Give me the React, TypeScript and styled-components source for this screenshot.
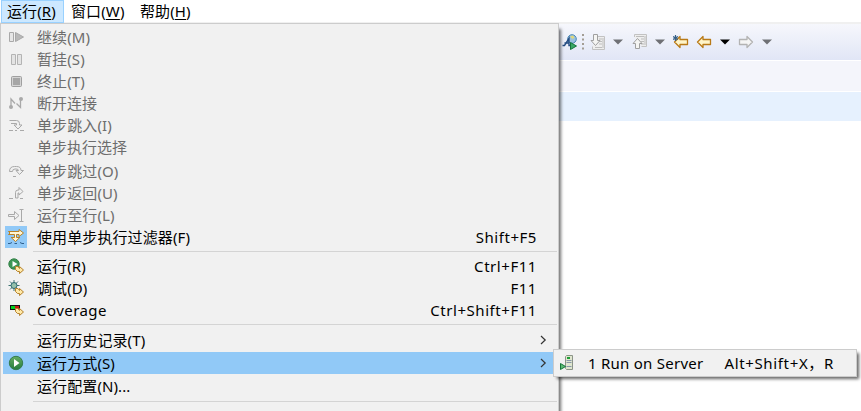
import React from 'react';
import styled, { createGlobalStyle } from 'styled-components';

const GlobalStyle = createGlobalStyle`
  * { box-sizing: border-box; }
  body {
    margin: 0;
    background: #fff;
    overflow: hidden;
    font-family: 'Noto Sans', 'Noto Sans CJK SC', sans-serif;
    font-size: 15px;
    color: #000;
  }
`;

const Window = styled.div`
  position: relative;
  width: 861px;
  height: 411px;
  overflow: hidden;
  background: #fff;
`;

const MenuBar = styled.nav`
  display: flex;
  height: 22px;
  padding-left: 1px;
  background: #fff;
`;

const MenuBarItem = styled.div<{ $open?: boolean; $width: number }>`
  width: ${p => p.$width}px;
  height: 23px;
  padding-left: ${p => (p.$open ? 5 : 6)}px;
  border: 1px solid ${p => (p.$open ? '#99d1ff' : 'transparent')};
  background: ${p => (p.$open ? '#cce8ff' : 'transparent')};
  line-height: 20px;
  letter-spacing: 0.1px;
  white-space: nowrap;
`;

const Toolbar = styled.div`
  display: flex;
  align-items: center;
  height: 38px;
  padding: 0 0 0 562px;
  border-top: 2px solid #f0f0f0;
  background: linear-gradient(#f6f7fc, #e1e6f6);
`;

const Tool = styled.span<{ $gap: number }>`
  display: flex;
  margin-left: ${p => p.$gap}px;
`;

const TabStrip = styled.div`
  height: 30px;
  margin-top: 1px;
  background: #f4f5fb;
`;

const CurrentLine = styled.div`
  height: 29px;
  margin-top: 1px;
  background: #e6f1fe;
`;

const Popup = styled.div`
  position: absolute;
  border: 1px solid #ccc;
  background: #f1f1f1;
`;

const RunMenu = styled(Popup)`
  left: 0;
  top: 23px;
  width: 559px;
  height: 420px;
  padding: 2px 0 0 2px;
  box-shadow: 3px 5px 3px -1px rgba(0, 0, 0, 0.55);
`;

const SubMenu = styled(Popup)`
  left: 553px;
  top: 349px;
  width: 304px;
  height: 28px;
  padding: 2px 1px 2px 0;
  box-shadow: 3px 3px 3px -1px rgba(0, 0, 0, 0.6);
`;

const Row = styled.div<{ $active?: boolean; $disabled?: boolean; $before?: number }>`
  display: flex;
  align-items: center;
  height: 22px;
  margin-top: ${p => p.$before ?? 0}px;
  padding-right: 11px;
  background: ${p => (p.$active ? '#91c9f7' : 'transparent')};
  color: ${p => (p.$disabled ? '#6d6d6d' : '#000')};
`;

const IconCell = styled.span<{ $checked?: boolean }>`
  display: flex;
  align-items: center;
  justify-content: center;
  width: 22px;
  height: 22px;
  margin: 0 10px 0 2px;
  background: ${p => (p.$checked ? '#91c9f7' : 'transparent')};
`;

const Label = styled.span<{ $spacing?: number }>`
  flex: 1;
  line-height: 22px;
  letter-spacing: ${p => p.$spacing ?? 0.1}px;
  white-space: pre;
`;

const Accel = styled.span<{ $spacing?: number }>`
  margin-right: 10px;
  line-height: 22px;
  letter-spacing: ${p => p.$spacing ?? 0.55}px;
  white-space: pre;
`;

const Separator = styled.div<{ $height: number; $lead: number }>`
  height: ${p => p.$height}px;
  margin: 0 1px 0 30px;
  padding-top: ${p => p.$lead}px;
  &::before {
    content: '';
    display: block;
    height: 1px;
    background: #d4d4d4;
  }
`;

const Key = styled.span`
  text-decoration: underline;
  text-decoration-thickness: 1px;
  text-underline-offset: 2px;
`;

const Svg = ({ children, w = 16, h = 16 }: { children: React.ReactNode; w?: number; h?: number }) => (
  <svg width={w} height={h} viewBox={`0 0 ${w} ${h}`} fill="none">{children}</svg>
);

const G = '#a9a9a9';

const ResumeIcon = () => (
  <Svg><path d="M1.500 3.500h4v9h-4z" fill="#e6e6e6" stroke={G} /><path d="M7.500 3.500v9l8-4.500z" fill="#b9b9b9" stroke={G} /></Svg>
);
const SuspendIcon = () => (
  <Svg><path d="M3.500 3.500h4v10h-4zM9.500 3.500h4v10h-4z" fill="#e4e4e4" stroke="#b4b4b4" /></Svg>
);
const StopIcon = () => (
  <Svg><rect x="3.500" y="3.500" width="10" height="10" rx="1" fill="#d4d4d4" stroke="#a0a0a0" /><path d="M5 5h7v7H5z" fill="#a6a6a6" /></Svg>
);
const DisconnectIcon = () => (
  <Svg>
    <path d="M3 12V4l4 4.500M12.500 5v7.500L8.500 8.500" stroke={G} strokeWidth="1.300" />
    <circle cx="3" cy="12" r="2" fill={G} /><circle cx="13" cy="4" r="2" fill={G} />
  </Svg>
);
const StepIntoIcon = () => (
  <Svg>
    <path d="M1.500 3.500h7q3 0 3 3v1.500h2.500l-4 4-4-4H8.500V6.500H3" fill="#f0f0f0" stroke={G} />
    <path d="M1 13.500h4M7 13.500h2M12 13.500h4" stroke={G} />
  </Svg>
);
const StepOverIcon = () => (
  <Svg>
    <path d="M1.500 8.500q0-5 5-5h2q4.500 0 4.500 4h2.500l-4 4-3.500-4h2.500q0-1.500-2.500-1.500H7q-2.500 0-2.500 2.500H1.500z" fill="#f0f0f0" stroke={G} />
    <path d="M5 13.500h3" stroke={G} />
  </Svg>
);
const StepReturnIcon = () => (
  <Svg>
    <path d="M7.500 13V7.500q0-2.500 2.500-2.500h1V2.500l4 4-4 3.500V8h-1v5z" fill="#f0f0f0" stroke={G} />
    <path d="M1 13.500h4M12 13.500h3" stroke={G} />
  </Svg>
);
const RunToLineIcon = () => (
  <Svg>
    <path d="M.5 7.500h6V4.500L11 8.500l-4.500 4V9.500h-6z" fill="#f0f0f0" stroke={G} />
    <path d="M11.500 2.500h4M13.500 2.500v12M11.500 14.500h4" stroke={G} />
  </Svg>
);
const StepFilterIcon = () => (
  <Svg>
    <path d="M.5 2.500H11V.5L15.500 4 11 7.500V5.500H8.500V8.500h3.300L7.500 12.500 3.200 8.500h3.300V5.500H.5L2 4z" fill="#fff6d6" stroke="#b9770e" strokeWidth=".9" />
    <path d="M0 14.500h2L4 13.500M6.500 14.500h2.500M12 13.500l2 1h2" stroke="#2f5f8c" />
  </Svg>
);

const GoldArrow = () => (
  <path d="M7.500 8.500h2.500l1.500 2V8.500L15.500 12l-4 3.500v-2H9.500L7.500 11.500z" fill="#ffe9a8" stroke="#b5812b" strokeLinejoin="round" />
);
const RunIcon = () => (
  <Svg>
    <circle cx="6" cy="6" r="5.200" fill="#3c9655" stroke="#358248" />
    <path d="M4.500 3v6l5-3z" fill="#fff" /><GoldArrow />
  </Svg>
);
const DebugIcon = () => (
  <Svg>
    <path d="M6 0v11M.5 5.500h11M2 1.500l8 8M2 9.500l8-8" stroke="#3f7371" />
    <circle cx="6" cy="5.500" r="3" fill="#93c0aa" stroke="#2c6871" /><GoldArrow />
  </Svg>
);
const CoverageIcon = () => (
  <Svg>
    <path d="M2 3h10v5H2z" fill="#111" /><path d="M3 4h4v3H3z" fill="#00cf20" /><path d="M7 4h4v3H7z" fill="#c61616" />
    <path d="M7.500 6.500h2.500l1.500 2V6.500L15.500 10l-4 3.500v-2H9.500L7.500 9.500z" fill="#ffe9a8" stroke="#b5812b" strokeLinejoin="round" />
  </Svg>
);
const RunAsIcon = () => (
  <Svg>
    <defs><linearGradient id="runGreen" x1="0" y1="0" x2="0" y2="1"><stop stopColor="#64ad62" /><stop offset="1" stopColor="#267c3e" /></linearGradient></defs>
    <circle cx="8" cy="8" r="6.700" fill="url(#runGreen)" stroke="#347c50" />
    <path d="M6 4v8l5.500-4z" fill="#fff" />
  </Svg>
);
const ServerIcon = () => (
  <Svg>
    <path d="M6.500 1.500l1-1h6v14h-6l-1-1z" fill="#dfe6cf" stroke="#8c9488" />
    <path d="M7.500 5.500h5M7.500 7.500h5M7.500 11.500h5" stroke="#8796a9" /><path d="M8 2h3v2H8z" fill="#1c9e35" />
    <path d="M1.500 8.500v6l5-3z" fill="#5dbb75" stroke="#17773b" />
  </Svg>
);

const PerspectiveIcon = () => (
  <Svg>
    <circle cx="10" cy="5" r="4.300" fill="#9ac2df" stroke="#4a87b5" />
    <path d="M8 2.500l3-1 1.500 2-2 1.500z" fill="#e0d87b" />
    <path d="M.5 11.500h2L7 4.500v7h2M2.500 9h5" stroke="#244c82" strokeWidth="1.400" />
    <path d="M8.500 8.500v7l6-3.500z" fill="#39a865" stroke="#16763b" />
  </Svg>
);
const GripIcon = () => (
  <Svg w={2} h={16}>
    <path d="M1 0v2M1 4.500v2M1 9v2M1 13.500v2" stroke="#a39d94" strokeWidth="2" />
  </Svg>
);
const NextAnnotationIcon = () => (
  <Svg>
    <path d="M6.500 2.500h8v13h-12v-3" fill="#eee" stroke="#c2c2c2" />
    <path d="M9 5h3M9 7.500h3M9 10h3M5 13.500h7M13 4v10" stroke="#bdbdbd" />
    <path d="M3.500.5h4v6h2.500L5.500 11.500 1 6.500h2.500z" fill="#f5f5f3" stroke="#a0a0a0" />
  </Svg>
);
const PreviousAnnotationIcon = () => (
  <Svg>
    <path d="M2.500 3V.5h12v12h-5" fill="#eee" stroke="#c2c2c2" />
    <path d="M4 2.500h8M9 5h3M9 7.500h3M9 10h3M13 2v9" stroke="#bdbdbd" />
    <path d="M5.500 4.500l4.500 5H7.500v5h-4v-5H1z" fill="#f5f5f3" stroke="#a0a0a0" />
  </Svg>
);
const LeftArrowIcon = ({ edit }: { edit?: boolean }) => (
  <Svg>
    <path d="M1.500 8L7 2.500v3h7.500v5H7v3z" fill="#fff5c9" stroke="#b97a17" strokeWidth="1.300" strokeLinejoin="round" />
    {edit && <path d="M2.500 1v6M0 2.500l5 3M5 2.500l-5 3" stroke="#345e86" strokeWidth="1.200" />}
  </Svg>
);
const RightArrowIcon = () => (
  <Svg><path d="M14.500 8L9 2.500v3H1.500v5H9v3z" fill="#f5f5f5" stroke="#b3b3b3" strokeWidth="1.300" strokeLinejoin="round" /></Svg>
);
const DropIcon = ({ color = '#6f7075' }: { color?: string }) => (
  <Svg w={10} h={6}><path d="M0 .5h10L5 5.500z" fill={color} /></Svg>
);
const Chevron = () => (
  <Svg w={7} h={10}><path d="M1 1l4.200 4L1 9" stroke="#333" strokeWidth="1.200" /></Svg>
);

type Item = {
  label: string;
  icon?: React.ReactNode;
  accel?: string;
  disabled?: boolean;
  checked?: boolean;
  active?: boolean;
  more?: boolean;
  before?: number;
  spacing?: number;
};

const stepping: Item[] = [
  { label: '继续(M)', icon: <ResumeIcon />, disabled: true },
  { label: '暂挂(S)', icon: <SuspendIcon />, disabled: true },
  { label: '终止(T)', icon: <StopIcon />, disabled: true },
  { label: '断开连接', icon: <DisconnectIcon />, disabled: true, spacing: 0 },
  { label: '单步跳入(I)', icon: <StepIntoIcon />, disabled: true },
  { label: '单步执行选择', disabled: true, spacing: 0 },
  { label: '单步跳过(O)', icon: <StepOverIcon />, disabled: true, before: 2 },
  { label: '单步返回(U)', icon: <StepReturnIcon />, disabled: true },
  { label: '运行至行(L)', icon: <RunToLineIcon />, disabled: true },
  { label: '使用单步执行过滤器(F)', icon: <StepFilterIcon />, accel: 'Shift+F5', checked: true },
];
const launching: Item[] = [
  { label: '运行(R)', icon: <RunIcon />, accel: 'Ctrl+F11' },
  { label: '调试(D)', icon: <DebugIcon />, accel: 'F11' },
  { label: 'Coverage', icon: <CoverageIcon />, accel: 'Ctrl+Shift+F11', spacing: 0.45 },
];
const configuring: Item[] = [
  { label: '运行历史记录(T)', more: true },
  { label: '运行方式(S)', icon: <RunAsIcon />, more: true, active: true, before: 1 },
  { label: '运行配置(N)...', before: 1 },
];

const MenuRow = ({ item }: { item: Item }) => (
  <Row $active={item.active} $disabled={item.disabled} $before={item.before}>
    <IconCell $checked={item.checked}>{item.icon}</IconCell>
    <Label $spacing={item.spacing}>{item.label}</Label>
    {item.accel && <Accel>{item.accel}</Accel>}
    {item.more && <Chevron />}
  </Row>
);

const rows = (items: Item[]) => items.map(item => <MenuRow key={item.label} item={item} />);

export default function App() {
  return (
    <>
      <GlobalStyle />
      <Window>
        <MenuBar>
          <MenuBarItem $open $width={63}>运行(<Key>R</Key>)</MenuBarItem>
          <MenuBarItem $width={69}>窗口(<Key>W</Key>)</MenuBarItem>
          <MenuBarItem $width={65}>帮助(<Key>H</Key>)</MenuBarItem>
        </MenuBar>
        <Toolbar>
          <Tool $gap={0}><PerspectiveIcon /></Tool>
          <Tool $gap={4}><GripIcon /></Tool>
          <Tool $gap={6}><NextAnnotationIcon /></Tool>
          <Tool $gap={7}><DropIcon /></Tool>
          <Tool $gap={9}><PreviousAnnotationIcon /></Tool>
          <Tool $gap={7}><DropIcon /></Tool>
          <Tool $gap={8}><LeftArrowIcon edit /></Tool>
          <Tool $gap={7}><LeftArrowIcon /></Tool>
          <Tool $gap={8}><DropIcon color="#000" /></Tool>
          <Tool $gap={8}><RightArrowIcon /></Tool>
          <Tool $gap={8}><DropIcon /></Tool>
        </Toolbar>
        <TabStrip />
        <CurrentLine />
        <RunMenu>
          {rows(stepping)}
          <Separator $height={7} $lead={3} />
          {rows(launching)}
          <Separator $height={8} $lead={3} />
          {rows(configuring)}
          <Separator $height={8} $lead={4} />
        </RunMenu>
        <SubMenu>
          <Row>
            <IconCell>
              <ServerIcon />
            </IconCell>
            <Label $spacing={0.25}>1 Run on Server</Label>
            <Accel $spacing={0.65}>{'Alt+Shift+X\uFF0CR'}</Accel>
          </Row>
        </SubMenu>
      </Window>
    </>
  );
}
